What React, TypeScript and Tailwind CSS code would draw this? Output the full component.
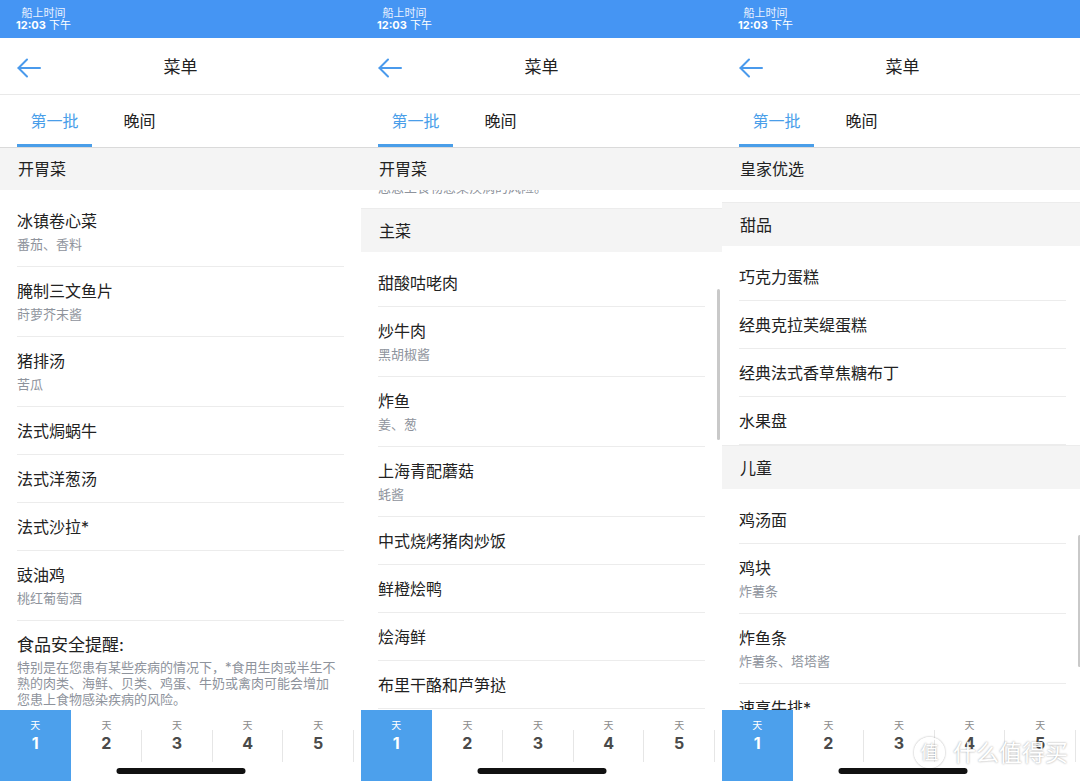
import type { ReactNode } from 'react';

type Dish = { name: string; sub?: string };

const panelOne: Dish[] = [
  { name: '冰镇卷心菜', sub: '番茄、香料' },
  { name: '腌制三文鱼片', sub: '莳萝芥末酱' },
  { name: '猪排汤', sub: '苦瓜' },
  { name: '法式焗蜗牛' },
  { name: '法式洋葱汤' },
  { name: '法式沙拉*' },
  { name: '豉油鸡', sub: '桃红葡萄酒' },
];

const mains: Dish[] = [
  { name: '甜酸咕咾肉' },
  { name: '炒牛肉', sub: '黑胡椒酱' },
  { name: '炸鱼', sub: '姜、葱' },
  { name: '上海青配蘑菇', sub: '蚝酱' },
  { name: '中式烧烤猪肉炒饭' },
  { name: '鲜橙烩鸭' },
  { name: '烩海鲜' },
  { name: '布里干酪和芦笋挞' },
];

const desserts: Dish[] = [
  { name: '巧克力蛋糕' },
  { name: '经典克拉芙缇蛋糕' },
  { name: '经典法式香草焦糖布丁' },
  { name: '水果盘' },
];

const kids: Dish[] = [
  { name: '鸡汤面' },
  { name: '鸡块', sub: '炸薯条' },
  { name: '炸鱼条', sub: '炸薯条、塔塔酱' },
  { name: '速享牛排*' },
];

const BackArrow = () => (
  <svg width="24" height="20" viewBox="0 0 24 20" fill="none" stroke="#4a9aec" strokeWidth="2" strokeLinecap="round" strokeLinejoin="round">
    <path d="M10 1.5 1.5 10 10 18.5" />
    <path d="M1.5 10H23" />
  </svg>
);

const StatusBar = () => (
  <div className="flex h-[38px] shrink-0 bg-[#4595f3] px-[16px] pt-[7px] text-white">
    <div className="flex flex-col items-center text-[11px] leading-[12px]">
      <span className="text-[#eaf2ff]">船上时间</span>
      <span>
        <span className="font-bold">12:03</span> 下午
      </span>
    </div>
  </div>
);

const NavBar = () => (
  <div className="flex h-[57px] shrink-0 items-center border-b border-[#e9e9e9] bg-white px-[17px] pt-[3px]">
    <BackArrow />
    <p className="flex-1 text-center text-[17px] text-[#222]">菜单</p>
    <div className="w-[24px]" />
  </div>
);

const Tabs = () => (
  <div className="flex h-[53px] shrink-0 border-b border-[#dadada] bg-white">
    <div className="ml-[17px] flex w-[75px] items-center justify-center border-b-[3px] border-[#4a9ee9] pt-[3px] text-[16px] text-[#4a9ee9]">
      第一批
    </div>
    <div className="ml-[10px] flex w-[75px] items-center justify-center pt-[3px] pb-[3px] text-[16px] text-[#222]">
      晚间
    </div>
  </div>
);

const SectionHeader = ({ label, first = false }: { label: string; first?: boolean }) => (
  <div
    className={`flex shrink-0 items-center bg-[#f4f4f4] px-[18px] text-[16px] text-[#222] ${
      first ? 'h-[42px]' : 'h-[44px] border-t border-[#ececec]'
    }`}
  >
    {label}
  </div>
);

const DishRow = ({ dish }: { dish: Dish }) =>
  dish.sub ? (
    <div className="mx-[17px] h-[70px] border-b border-[#ececec] pt-[13px]">
      <p className="text-[16px] leading-[22px] text-[#222]">{dish.name}</p>
      <p className="mt-[2px] text-[13px] leading-[20px] text-[#8e939c]">{dish.sub}</p>
    </div>
  ) : (
    <div className="mx-[17px] flex h-[48px] items-center border-b border-[#ececec] text-[16px] text-[#222]">
      {dish.name}
    </div>
  );

const DishList = ({ dishes }: { dishes: Dish[] }) => (
  <div className="pt-[7px]">
    {dishes.map((d) => (
      <DishRow key={d.name} dish={d} />
    ))}
  </div>
);

const DayBar = () => (
  <div className="relative flex h-[71px] shrink-0 items-stretch bg-white">
    {[1, 2, 3, 4, 5, 6].map((day, i) => (
      <div key={day} className="flex shrink-0 items-center">
        {i > 0 ? <div className={`h-[32px] w-px ${i > 1 ? 'bg-[#e6e6e6]' : 'bg-transparent'}`} /> : null}
        <div
          className={`flex h-full flex-col items-center pt-[9px] ${i === 0 ? 'w-[70.6px] bg-[#4ca0ec] text-white' : 'w-[69.6px] text-[#4a4a4a]'}`}
        >
          <span className={`text-[10px] leading-[12px] ${i === 0 ? 'text-white' : 'text-[#8a8a8a]'}`}>天</span>
          <span className="mt-[2px] text-[16px] font-bold leading-[20px]">{day}</span>
        </div>
      </div>
    ))}
    <div className="absolute bottom-[7px] left-1/2 h-[6px] w-[129px] -translate-x-1/2 rounded-full bg-[#111]" />
  </div>
);

const Phone = ({ children, scrollbar }: { children: ReactNode; scrollbar?: string }) => (
  <div className="flex h-[781px] w-[361px] shrink-0 flex-col overflow-hidden bg-white">
    <StatusBar />
    <NavBar />
    <Tabs />
    <div className="relative flex-1 overflow-hidden">
      {children}
      {scrollbar ? <div className={`absolute right-[2px] w-[3px] rounded-full bg-[#c9c9c9] ${scrollbar}`} /> : null}
    </div>
    <DayBar />
  </div>
);

export default function App() {
  return (
    <div className="relative flex h-[781px] w-[1080px] overflow-hidden bg-white font-['Inter','Noto_Sans_CJK_SC',sans-serif]">
      <Phone>
        <SectionHeader label="开胃菜" first />
        <DishList dishes={panelOne} />
        <div className="mx-[17px] pt-[12px]">
          <p className="text-[17px] leading-[24px] text-[#222]">食品安全提醒:</p>
          <p className="mt-[2px] text-[13px] leading-[16px] text-[#8e939c]">
            特别是在您患有某些疾病的情况下，*食用生肉或半生不熟的肉类、海鲜、贝类、鸡蛋、牛奶或禽肉可能会增加
            <br />
            您患上食物感染疾病的风险。
          </p>
        </div>
      </Phone>

      <Phone scrollbar="top-[141px] h-[151px]">
        <SectionHeader label="开胃菜" first />
        <div className="h-[18px] overflow-hidden px-[17px]">
          <p className="-mt-[11px] text-[13px] leading-[16px] text-[#8e939c]">您患上食物感染疾病的风险。</p>
        </div>
        <SectionHeader label="主菜" />
        <DishList dishes={mains} />
      </Phone>

      <Phone scrollbar="top-[387px] h-[132px]">
        <SectionHeader label="皇家优选" first />
        <div className="h-[12px]" />
        <SectionHeader label="甜品" />
        <DishList dishes={desserts} />
        <SectionHeader label="儿童" />
        <DishList dishes={kids} />
      </Phone>

      {/* watermark over the last screen */}
      <div className="pointer-events-none absolute left-[914px] top-[737px] flex items-center gap-[8px] text-white opacity-90 [text-shadow:0_0_2px_rgba(0,0,0,0.45)]">
        <div className="flex h-[31px] w-[31px] items-center justify-center rounded-full border-2 border-white text-[18px] shadow-[0_0_2px_rgba(0,0,0,0.4)]">
          值
        </div>
        <span className="text-[23px] leading-[28px]">什么值得买</span>
      </div>
    </div>
  );
}
